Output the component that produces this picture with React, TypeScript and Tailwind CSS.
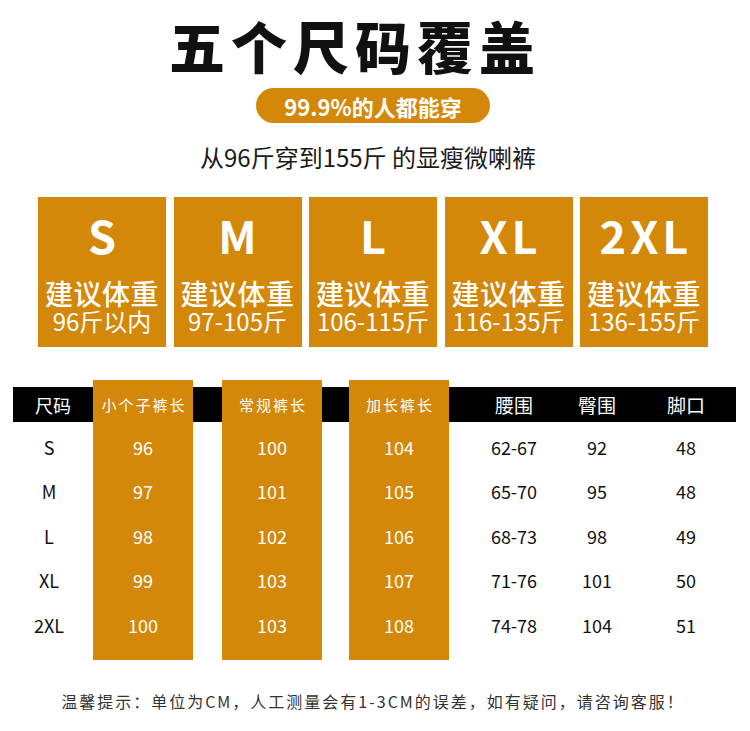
const sizes = [
  { name: "S", range: "96斤以内" },
  { name: "M", range: "97-105斤" },
  { name: "L", range: "106-115斤" },
  { name: "XL", range: "116-135斤" },
  { name: "2XL", range: "136-155斤" },
];

const rows = [
  { size: "S", petite: "96", regular: "100", tall: "104", waist: "62-67", hip: "92", hem: "48" },
  { size: "M", petite: "97", regular: "101", tall: "105", waist: "65-70", hip: "95", hem: "48" },
  { size: "L", petite: "98", regular: "102", tall: "106", waist: "68-73", hip: "98", hem: "49" },
  { size: "XL", petite: "99", regular: "103", tall: "107", waist: "71-76", hip: "101", hem: "50" },
  { size: "2XL", petite: "100", regular: "103", tall: "108", waist: "74-78", hip: "104", hem: "51" },
];

const SizeCard = ({ name, range }: { name: string; range: string }) => {
  return (
    <div className="flex h-[150px] w-[128px] flex-col items-center bg-[#d3880a] text-white">
      <div className="mt-[15px] pl-[4px] text-[45px] font-bold leading-none tracking-[4px]">
        {name}
      </div>
      <div className="mt-[22px] text-[28px] font-medium leading-none tracking-[0.5px]">
        建议体重
      </div>
      <div className="mt-[2px] text-[24px] leading-none">{range}</div>
    </div>
  );
};

const GoldCol = ({ title, values }: { title: string; values: string[] }) => {
  return (
    <div className="flex w-[100px] flex-col bg-[#d3880a] pb-[13px] text-white">
      <div className="flex h-[42px] items-center justify-center pl-[2px] pt-[7px] text-[15px] leading-none tracking-[2px]">
        {title}
      </div>
      <div className="pt-[2.5px]">
        {values.map((v, i) => (
          <div
            key={i}
            className="flex h-[44.5px] items-center justify-center text-[18px] leading-none"
          >
            {v}
          </div>
        ))}
      </div>
    </div>
  );
};

const Spacer = ({ width }: { width: string }) => {
  return (
    <div className={width}>
      <div className="mt-[7px] h-[35px] bg-black" />
    </div>
  );
};

export default function App() {
  return (
    <div className="flex h-[731px] w-[750px] flex-col items-center bg-white font-['Noto_Sans_CJK_SC','Noto_Sans',sans-serif] text-[#111]">
      <h1 className="mr-[40px] pt-[17px] text-[56px] font-black leading-none tracking-[6px]">
        五个尺码覆盖
      </h1>
      <div className="mr-[4px] mt-[15px] flex h-[35px] w-[234px] items-center justify-center rounded-full bg-[#d3880a] text-[22px] font-bold leading-none text-white">
        99.9%的人都能穿
      </div>
      <p className="mr-[14px] mt-[22px] text-[24px] leading-none text-[#1a1a1a]">
        从96斤穿到155斤 的显瘦微喇裤
      </p>

      <div className="mr-[4px] mt-[28px] flex gap-[7.5px]">
        {sizes.map((s) => (
          <SizeCard key={s.name} name={s.name} range={s.range} />
        ))}
      </div>

      <div className="mt-[33px] flex w-[724px]">
        <div className="w-[80px]">
          <div className="mt-[7px] flex h-[35px] items-center justify-center bg-black text-[18px] leading-none text-white">
            尺码
          </div>
          <div className="pt-[2.5px]">
            {rows.map((r) => (
              <div
                key={r.size}
                className="flex h-[44.5px] items-center justify-center pr-[8px] text-[18px] leading-none"
              >
                {r.size}
              </div>
            ))}
          </div>
        </div>
        <GoldCol title="小个子裤长" values={rows.map((r) => r.petite)} />
        <Spacer width="w-[29px]" />
        <GoldCol title="常规裤长" values={rows.map((r) => r.regular)} />
        <Spacer width="w-[27px]" />
        <GoldCol title="加长裤长" values={rows.map((r) => r.tall)} />
        <div className="w-[287px]">
          <div className="mt-[7px] flex h-[35px] items-center bg-black text-[19px] leading-none text-white">
            <div className="ml-[30px] w-[70px] text-center">腰围</div>
            <div className="ml-[13px] w-[70px] text-center">臀围</div>
            <div className="ml-[19px] w-[70px] text-center">脚口</div>
          </div>
          <div className="pt-[2.5px]">
            {rows.map((r) => (
              <div key={r.size} className="flex h-[44.5px] items-center text-[18px] leading-none">
                <div className="ml-[30px] w-[70px] text-center">{r.waist}</div>
                <div className="ml-[13px] w-[70px] text-center">{r.hip}</div>
                <div className="ml-[19px] w-[70px] text-center">{r.hem}</div>
              </div>
            ))}
          </div>
        </div>
      </div>

      <p className="mr-[4px] mt-[33px] text-[16px] leading-none tracking-[2px] text-[#333]">
        温馨提示：单位为CM，人工测量会有1-3CM的误差，如有疑问，请咨询客服！
      </p>
    </div>
  );
}
